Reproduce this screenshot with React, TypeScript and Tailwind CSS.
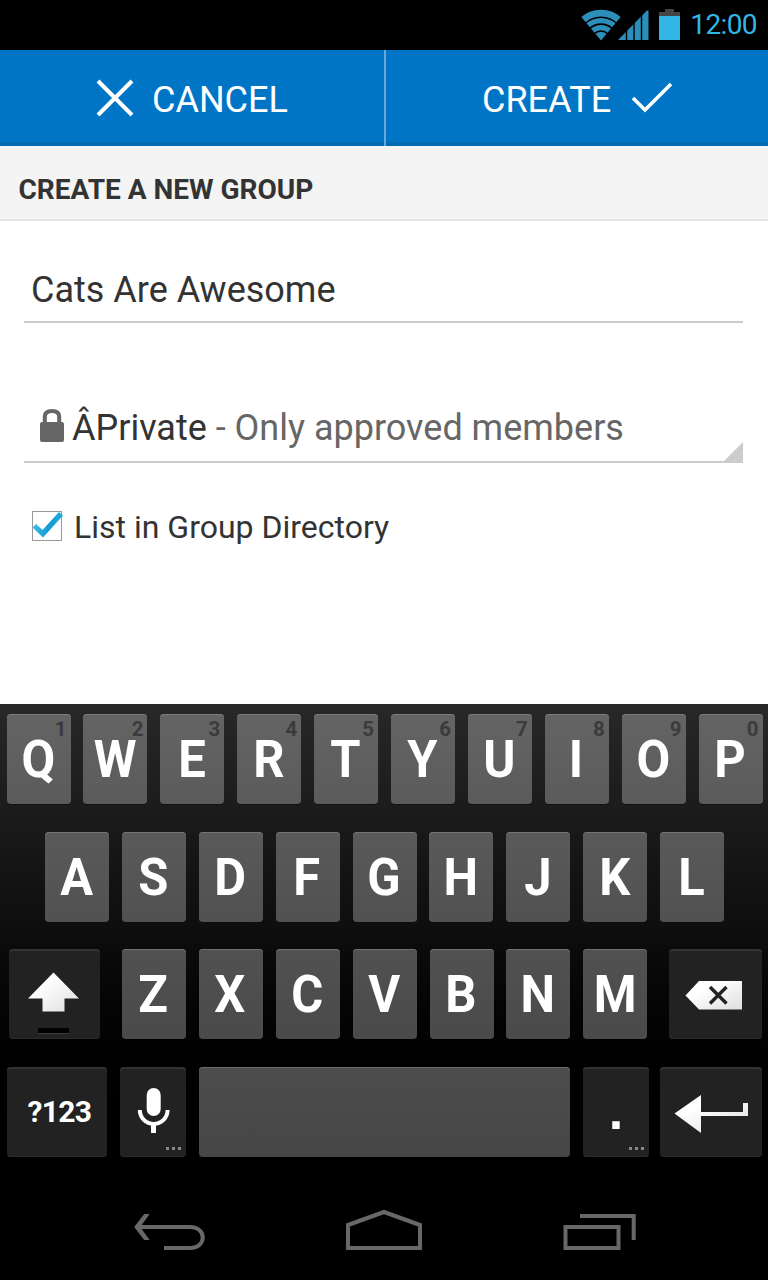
import type { ReactNode } from "react";

const TOP_ROW = ["Q", "W", "E", "R", "T", "Y", "U", "I", "O", "P"];
const HOME_ROW = ["A", "S", "D", "F", "G", "H", "J", "K", "L"];
const BOTTOM_ROW = ["Z", "X", "C", "V", "B", "N", "M"];

function StatusBar() {
  return (
    <div className="flex h-[50px] shrink-0 items-start justify-end bg-black pr-[11px]">
      <svg className="h-[50px] w-[104px]" viewBox="0 0 104 50">
        <defs>
          <clipPath id="wifi-fan">
            <path d="M24 40.5 L3.5 16 V0 H44.5 V16 Z" />
          </clipPath>
        </defs>
        <g clipPath="url(#wifi-fan)" fill="none" stroke="#2b8fb9">
          <circle cx="24" cy="40.5" r="27.4" strokeWidth="6.8" />
          <circle cx="24" cy="40.5" r="19.9" strokeWidth="5.4" />
          <circle cx="24" cy="40.5" r="12.9" strokeWidth="5.2" />
          <circle cx="24" cy="40.5" r="4.4" strokeWidth="8.8" />
        </g>
        <path d="M41 40 L70 10.5 H71.5 V40 Z" fill="#2b8fb9" />
        <path d="M64.5 10 V40 M57 17 V40 M49.5 24 V40" stroke="#000" strokeWidth="1.4" />
        <path d="M82 12 H88 V9 H97 V12 H103 V16 H82 Z" fill="#454545" />
        <path d="M82 16 H103 V40 H82 Z" fill="#33b5e5" />
      </svg>
      <span className="ml-[9px] text-[28px] leading-[50px] tracking-[-0.6px] text-[#33b5e5]">12:00</span>
    </div>
  );
}

function ActionBar() {
  return (
    <div className="flex h-[96px] shrink-0 border-b-4 border-[#006ab3] bg-[#0075c6] text-[36px] leading-[40px] text-white">
      <button className="flex h-[96px] w-[384px] items-center pl-[96px]">
        <svg className="h-[38px] w-[38px]" viewBox="0 0 38 38" fill="none" stroke="#fff" strokeWidth="4">
          <path d="M2 2 L36 36 M36 2 L2 36" />
        </svg>
        <span className="ml-[18px] mt-[3px]">CANCEL</span>
      </button>
      <button className="flex h-[96px] w-[384px] items-center border-l-2 border-[#66aadd] pl-[96px]">
        <span className="mt-[3px]">CREATE</span>
        <svg className="ml-[20px] -mt-[3px] h-[32px] w-[42px]" viewBox="0 0 42 32" fill="none" stroke="#fff" strokeWidth="3.6">
          <path d="M2 17 L14 29 L40 3" />
        </svg>
      </button>
    </div>
  );
}

function GroupForm() {
  return (
    <div className="flex h-[483px] shrink-0 flex-col bg-white px-6 text-[#333]">
      <div className="mt-[24px] flex h-[78px] w-[719px] items-center border-b-2 border-[#ccc] pl-[7px] text-[36px]">
        <span className="mt-[14px]">Cats Are Awesome</span>
      </div>
      <div className="relative mt-[62px] flex h-[78px] w-[719px] items-center border-b-2 border-[#ccc] pl-[16px] text-[36px]">
        <svg className="mt-[4px] h-[34px] w-[24px]" viewBox="0 0 24 34">
          <path d="M4.8 15 V8.5 Q4.8 3 12 3 Q19.2 3 19.2 8.5 V15" fill="none" stroke="#666" strokeWidth="4" />
          <rect y="14" width="24" height="20" rx="2" fill="#666" />
        </svg>
        <span className="ml-[8px] mt-[10px] whitespace-pre">
          ÂPrivate<span className="text-[#666]"> - Only approved members</span>
        </span>
        <svg className="absolute -bottom-[2px] right-0 h-[21px] w-[21px]" viewBox="0 0 21 21">
          <path d="M21 0 V21 H0 Z" fill="#ccc" />
        </svg>
      </div>
      <div className="mt-[38px] flex h-[50px] items-center pl-2 text-[32px]">
        <svg className="h-[32px] w-[32px]" viewBox="0 0 32 32">
          <defs>
            <linearGradient id="tick" x1="0" y1="0" x2="1" y2="0">
              <stop offset="0" stopColor="#41bdec" />
              <stop offset="0.5" stopColor="#149bd2" />
              <stop offset="1" stopColor="#22a9dc" />
            </linearGradient>
          </defs>
          <rect x="0.5" y="1.5" width="29" height="29" fill="#fff" stroke="#999" />
          <path d="M0.5 17.5 L4 14 L10.5 20 L27 2 L31 5.5 L11 27.5 Z" fill="url(#tick)" />
        </svg>
        <span className="ml-[10px] mt-[1px]">List in Group Directory</span>
      </div>
    </div>
  );
}

function LetterKey({ letter, hint, tone }: { letter: string; hint?: string; tone: string }) {
  return (
    <div className={`relative h-[90px] w-[64px] shrink-0 rounded-[4px] text-center text-[52px] font-bold leading-[92px] text-white ${tone}`}>
      <span className="inline-block -translate-x-[0.7px] scale-x-[0.94]">{letter}</span>
      {hint && (
        <span className="absolute right-[4px] top-[3px] text-[20.5px] leading-[24px] text-[#3b3b3b]">{hint}</span>
      )}
    </div>
  );
}

function DarkKey({ className, children }: { className: string; children: ReactNode }) {
  return (
    <div className={`relative h-[90px] shrink-0 rounded-[4px] bg-[#222] shadow-[inset_0_2px_0_#333,inset_0_-1px_0_#2a2a2a] ${className}`}>
      {children}
    </div>
  );
}

function MoreDots() {
  return (
    <svg className="absolute bottom-[7px] right-[5px] h-[3px] w-[15px]" viewBox="0 0 15 3">
      <path d="M0 0 H3 V3 H0 Z M6 0 H9 V3 H6 Z M12 0 H15 V3 H12 Z" fill="#888" />
    </svg>
  );
}

function Keyboard() {
  return (
    <div className="flex h-[464px] shrink-0 flex-col gap-[27.5px] bg-linear-to-b from-[#282828] via-[#0d0d0d] to-black pt-[10px]">
      <div className="flex gap-[12.9px] pl-[6.5px]">
        {TOP_ROW.map((letter, i) => (
          <LetterKey
            key={letter}
            letter={letter}
            hint={String((i + 1) % 10)}
            tone="bg-linear-to-b from-[#646464] to-[#5b5b5b] shadow-[inset_0_1px_0_#7b7b7b,0_1px_0_#111]"
          />
        ))}
      </div>
      <div className="flex gap-[12.9px] pl-[45px]">
        {HOME_ROW.map((letter) => (
          <LetterKey
            key={letter}
            letter={letter}
            tone="bg-linear-to-b from-[#5a5a5a] to-[#515151] shadow-[inset_0_1px_0_#757575]"
          />
        ))}
      </div>
      <div className="flex">
        <DarkKey className="ml-[9px] mr-[22px] w-[91px]">
          <svg className="h-[90px] w-[91px]" viewBox="0 0 91 90">
            <defs>
              <linearGradient id="silver" x1="0" y1="0" x2="1" y2="1">
                <stop offset="0.3" stopColor="#fff" />
                <stop offset="1" stopColor="#dedede" />
              </linearGradient>
            </defs>
            <path d="M44.5 23.5 L70 49.5 H55.5 V62.5 H33.5 V49.5 H19 Z" fill="url(#silver)" />
            <rect x="29" y="79" width="31" height="5" fill="#000" />
            <path d="M29 84.5 H60" stroke="#3c3c3c" />
          </svg>
        </DarkKey>
        <div className="flex gap-[12.9px]">
          {BOTTOM_ROW.map((letter) => (
            <LetterKey
              key={letter}
              letter={letter}
              tone="bg-linear-to-b from-[#515151] to-[#4a4a4a] shadow-[inset_0_1px_0_#707070]"
            />
          ))}
        </div>
        <DarkKey className="ml-[21.6px] w-[93px]">
          <svg className="h-[90px] w-[93px]" viewBox="0 0 93 90">
            <path d="M16.5 46.5 L30 32 H73 V60.5 H30 Z" fill="url(#silver)" />
            <path d="M41 38 L57.5 54.5 M57.5 38 L41 54.5" stroke="#222" strokeWidth="3.4" />
          </svg>
        </DarkKey>
      </div>
      <div className="flex">
        <DarkKey className="ml-[7px] mr-[13px] w-[100px] text-center text-[30px] font-bold leading-[90px] text-white">
          <span className="relative left-[2.5px] tracking-[-0.7px]">?123</span>
        </DarkKey>
        <DarkKey className="mr-[13px] w-[66px]">
          <svg className="h-[90px] w-[66px]" viewBox="0 0 66 90">
            <rect x="26.7" y="21" width="14" height="28" rx="7" fill="#fff" />
            <path d="M19.8 43 A13.9 13.9 0 0 0 47.6 43" fill="none" stroke="#fff" strokeWidth="4" />
            <path d="M33.5 57 V66" stroke="#fff" strokeWidth="5" />
          </svg>
          <MoreDots />
        </DarkKey>
        <div className="mr-[13px] h-[90px] w-[371px] rounded-[4px] bg-linear-to-b from-[#4d4d4d] to-[#464646] shadow-[inset_0_1px_0_#6c6c6c]" />
        <DarkKey className="mr-[11px] w-[66px] text-center font-['Liberation_Sans',sans-serif] text-[52px] font-bold leading-[88px] text-white">
          .
          <MoreDots />
        </DarkKey>
        <DarkKey className="w-[102px]">
          <svg className="h-[90px] w-[102px]" viewBox="0 0 102 90">
            <path d="M14.5 46.5 L41 28 V45 H83 V36 H88 V49 H41 V66 Z" fill="url(#silver)" />
          </svg>
        </DarkKey>
      </div>
    </div>
  );
}

function NavigationBar() {
  return (
    <div className="flex h-[112px] shrink-0 items-start bg-black pl-[133px] pt-[41px]">
      <svg className="h-[42px] w-[72px]" viewBox="0 0 72 42" fill="none" stroke="#686868" strokeWidth="4">
        <path d="M4 18 H57 C74 18 74 39 57 39 H31" />
        <path d="M1.2 18 L11.2 5 H16.7 L7.2 18 L16.7 31 H11.2 Z" fill="#686868" stroke="none" />
      </svg>
      <svg className="ml-[140px] h-[42px] w-[78px]" viewBox="0 0 78 42" fill="none" stroke="#686868" strokeWidth="4">
        <path d="M3 39 V16 L39 3 L75 16 V39 Z" />
      </svg>
      <svg className="ml-[140px] h-[42px] w-[74px]" viewBox="0 0 74 42" fill="none" stroke="#686868" strokeWidth="4">
        <rect x="2.5" y="18" width="53" height="21" />
        <path d="M17 7 H70.7 V31" />
      </svg>
    </div>
  );
}

export default function App() {
  return (
    <div className="flex h-[1280px] w-[768px] flex-col overflow-hidden bg-black font-['Roboto',sans-serif]">
      <StatusBar />
      <ActionBar />
      <div className="flex h-[75px] shrink-0 items-center border-b-2 border-[#e6e6e6] bg-[#f4f4f4] pl-[18.5px] pt-[14px] text-[28px] font-bold text-[#333]">
        <h1>CREATE A NEW GROUP</h1>
      </div>
      <GroupForm />
      <Keyboard />
      <NavigationBar />
    </div>
  );
}
